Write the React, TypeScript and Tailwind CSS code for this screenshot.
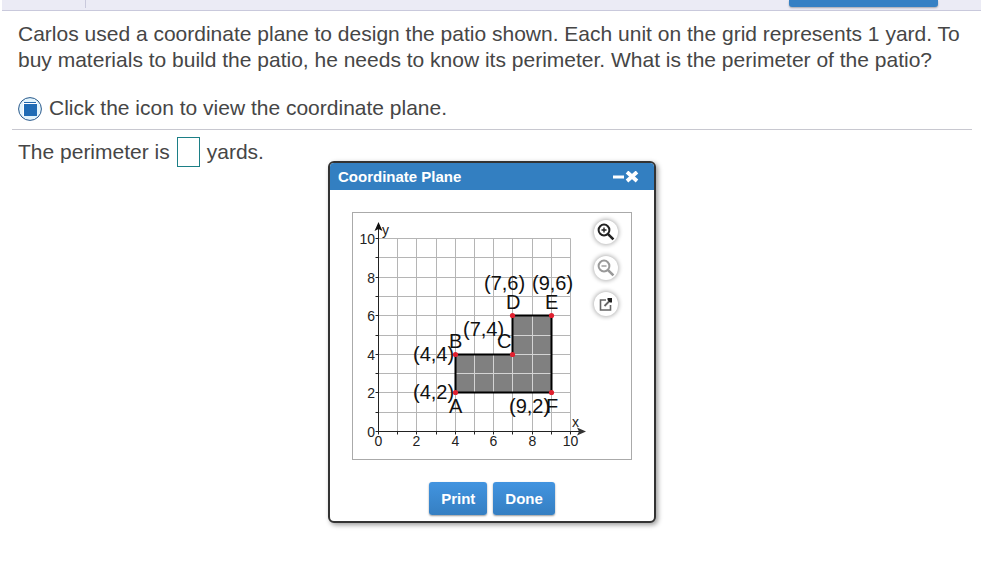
import { useState } from 'react';

const X0 = 25;
const Y0 = 218;
const UNIT_X = 19.2;
const UNIT_Y = 19.3;
const px = (v: number) => Math.round(X0 + v * UNIT_X) + 0.5;
const py = (v: number) => Math.round(Y0 - v * UNIT_Y) + 0.5;

const steps = [1, 2, 3, 4, 5, 6, 7, 8, 9, 10];
const evens = [0, 2, 4, 6, 8, 10];
const vertices: [number, number][] = [
  [4, 2],
  [4, 4],
  [7, 4],
  [7, 6],
  [9, 6],
  [9, 2],
];
const labels: [string, number, number][] = [
  ['(7,6)', 131, 77],
  ['(9,6)', 179, 77],
  ['D', 153, 96],
  ['E', 192, 96],
  ['(7,4)', 110, 123],
  ['B', 96, 135],
  ['C', 144, 135],
  ['(4,4)', 60, 148],
  ['(4,2)', 60, 186],
  ['A', 96, 200],
  ['(9,2)', 156, 200],
  ['F', 193, 200],
];

function CoordinateGraph() {
  const points = vertices.map(([x, y]) => `${px(x)},${py(y)}`).join(' ');
  return (
    <svg width="238" height="246" viewBox="0 0 238 246" role="img" aria-label="Coordinate plane with patio ABCDEF" className="shrink-0">
      <g stroke="#b5b5b5" strokeWidth="1">
        {steps.map((n) => (
          <g key={n}>
            <line x1={px(n)} x2={px(n)} y1={py(10)} y2={py(0)} />
            <line x1={px(0)} x2={px(10)} y1={py(n)} y2={py(n)} />
          </g>
        ))}
      </g>
      <polygon points={points} fill="#808080" />
      <g stroke="#d4d4d4" strokeWidth="1">
        {[5, 6, 7].map((n) => (
          <line key={n} x1={px(n)} x2={px(n)} y1={py(4)} y2={py(2)} />
        ))}
        <line x1={px(8)} x2={px(8)} y1={py(6)} y2={py(2)} />
        <line x1={px(4)} x2={px(9)} y1={py(3)} y2={py(3)} />
        <line x1={px(7)} x2={px(9)} y1={py(4)} y2={py(4)} />
        <line x1={px(7)} x2={px(9)} y1={py(5)} y2={py(5)} />
      </g>
      <polygon points={points} fill="none" stroke="#000" strokeWidth="2" />
      <g stroke="#222" strokeWidth="1">
        <line x1={px(0)} x2={px(0)} y1="14" y2={py(0) + 3} />
        <line x1={px(0) - 3} x2="228" y1={py(0)} y2={py(0)} />
        {steps.map((n) => (
          <g key={n}>
            <line x1={px(n)} x2={px(n)} y1={py(0)} y2={py(0) + 3} />
            <line x1={px(0) - 3} x2={px(0)} y1={py(n)} y2={py(n)} />
          </g>
        ))}
      </g>
      <path d="M25.5 9 L29.5 18 L25.5 16 L21.5 18 Z" fill="#111" />
      <path d="M233 218.5 L224 214.5 L226 218.5 L224 222.5 Z" fill="#333" />
      <g fontSize="14" fill="#222">
        {evens.map((n) => (
          <g key={n}>
            <text x="22" y={py(n) + 5} textAnchor="end">{n}</text>
            <text x={px(n)} y="233" textAnchor="middle">{n}</text>
          </g>
        ))}
        <text x="29" y="22">y</text>
        <text x="219" y="214">x</text>
      </g>
      <g fontSize="20" fill="#111">
        {labels.map(([t, x, y]) => (
          <text key={t} x={x} y={y}>{t}</text>
        ))}
      </g>
      {vertices.map(([x, y]) => (
        <circle key={`${x}-${y}`} cx={px(x)} cy={py(y)} r="2.6" fill="#e0202f" />
      ))}
    </svg>
  );
}

const toolClass = 'flex size-6 items-center justify-center rounded-full bg-white shadow-[0_0_4px_1px_rgba(0,0,0,0.3)]';
const actionClass =
  'h-[33px] rounded-[3px] bg-linear-to-b from-[#4294e0] to-[#357fc2] px-3 pt-[2px] text-[15px] font-bold text-white shadow-[0_1px_2px_rgba(0,0,0,0.4)]';

function Magnifier({ plus }: { plus?: boolean }) {
  return (
    <svg width="18" height="18" viewBox="0 0 18 18" fill="none" stroke="currentColor" aria-hidden="true">
      <circle cx="7" cy="7" r="5.4" strokeWidth="2" />
      <path d="M10.8 10.8 L16.4 16.4" strokeWidth="2.6" />
      <path d={plus ? 'M4.5 7 H9.5 M7 4.5 V9.5' : 'M4.5 7 H9.5'} strokeWidth="1.4" />
    </svg>
  );
}

function PlaneDialog() {
  return (
    <section
      role="dialog"
      aria-labelledby="plane-title"
      className="absolute top-[161px] left-[328px] w-[328px] overflow-hidden rounded-md border-2 border-[#333] bg-white shadow-[2px_2px_5px_rgba(0,0,0,0.4)]"
    >
      <header className="flex h-[27px] items-center justify-between bg-[#337fc1] pr-[15px] pl-2 text-white">
        <h2 id="plane-title" className="text-[15px] leading-5 font-bold">Coordinate Plane</h2>
        <div className="flex items-center">
          <button type="button" aria-label="Minimize" className="flex">
            <svg width="12" height="12" viewBox="0 0 12 12" aria-hidden="true"><path d="M0 6 H11" stroke="currentColor" strokeWidth="3" /></svg>
          </button>
          <button type="button" aria-label="Close" className="flex">
            <svg width="14" height="12" viewBox="0 0 14 12" aria-hidden="true"><path d="M2 1 L12 10 M12 1 L2 10" stroke="currentColor" strokeWidth="3.8" /></svg>
          </button>
        </div>
      </header>
      <div className="px-[22px] pt-[22px] pb-[6px]">
        <div className="flex border border-[#aaa]">
          <CoordinateGraph />
          <div className="flex flex-col gap-3 pt-[7px] pl-[3px]">
            <button type="button" aria-label="Zoom in" className={`${toolClass} text-[#222]`}><Magnifier plus /></button>
            <button type="button" aria-label="Zoom out" className={`${toolClass} text-[#999]`}><Magnifier /></button>
            <button type="button" aria-label="Open in new window" className={`${toolClass} text-[#666]`}>
              <svg width="16" height="16" viewBox="0 0 16 16" fill="none" stroke="currentColor" aria-hidden="true">
                <path d="M8 4 H2.5 V14 H12.5 V9" strokeWidth="1.6" />
                <path d="M6.5 10 L12 4.5" strokeWidth="1.8" />
                <path d="M9.5 2 H14 V6.5 H12 L9.5 4 Z" fill="#222" stroke="none" />
              </svg>
            </button>
          </div>
        </div>
        <div className="flex justify-center gap-[6px] pt-[22px]">
          <button type="button" className={actionClass}>Print</button>
          <button type="button" className={actionClass}>Done</button>
        </div>
      </div>
    </section>
  );
}

export default function App() {
  const [answer, setAnswer] = useState('');
  return (
    <div className="relative min-h-screen bg-white font-['Liberation_Sans',Arial,sans-serif] text-[#464646]">
      <div className="ml-[2px] flex h-[11px] items-start border-b border-[#c9c9dc] bg-[#ebebf5]">
        <div className="h-2 w-[84px] border-r border-[#c9c9dc]" />
        <button type="button" aria-label="Question help" className="mr-[43px] ml-auto h-[7px] w-[149px] rounded-b-[3px] bg-[#3580c4] shadow-[0_1px_2px_rgba(0,0,0,0.3)]" />
      </div>
      <main className="pr-[9px] pl-3 text-[21px] leading-[26px]">
        <p className="px-[6px] pt-[10px]">
          Carlos used a coordinate plane to design the patio shown. Each unit on the grid represents 1 yard. To buy materials to build the patio, he needs to know its perimeter. What is the perimeter of the patio?
        </p>
        <div className="flex items-end gap-[7px] border-b border-[#c8c8d0] px-[6px] pt-[22px] pb-2">
          <button type="button" aria-label="View the coordinate plane" className="flex">
            <svg width="24" height="24" viewBox="0 0 24 24" aria-hidden="true">
              <circle cx="12" cy="12" r="11.4" fill="#e3f5fd" stroke="#29588a" strokeWidth="1" />
              <rect x="5" y="5" width="14" height="14" fill="#fff" />
              <path d="M6 5.5 H18" stroke="#1f68ae" strokeWidth="1" />
              <rect x="6" y="7" width="13" height="12" fill="#1f6cb5" />
            </svg>
          </button>
          <span>Click the icon to view the coordinate plane.</span>
        </div>
        <div className="flex items-center px-[6px] pt-[7px]">
          <label htmlFor="answer">The perimeter is</label>
          <input
            id="answer"
            value={answer}
            onChange={(e) => setAnswer(e.target.value)}
            className="mr-[7px] ml-[7px] h-[30px] w-[23px] border border-[#1c7f86] bg-white text-center outline-none"
          />
          <span>yards.</span>
        </div>
      </main>
      <PlaneDialog />
    </div>
  );
}
